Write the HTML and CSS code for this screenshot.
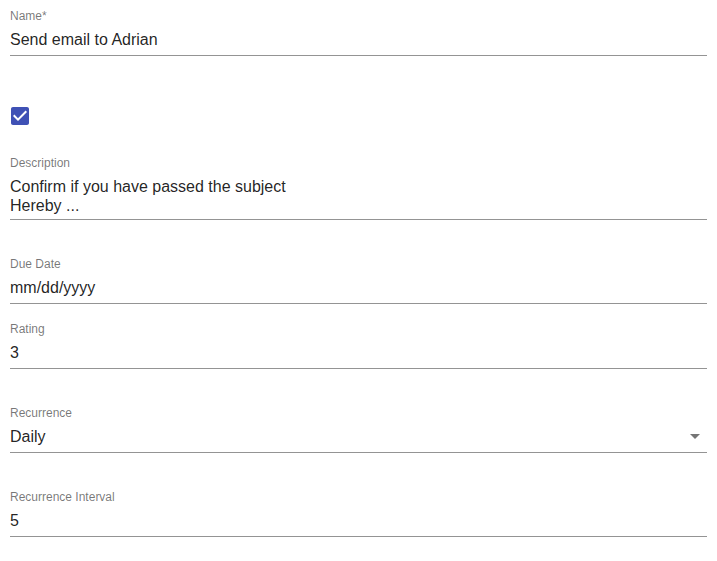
FILE: index.html
```html
<!DOCTYPE html>
<html lang="en">
<head>
<meta charset="utf-8">
<title>Task form</title>
<link rel="stylesheet" href="styles.css">
</head>
<body>
<form class="form">
  <div class="field field-name">
    <label class="label">Name*</label>
    <div class="input">Send email to Adrian</div>
  </div>
  <div class="check-row">
    <svg class="check" viewBox="0 0 24 24" width="24" height="24" aria-hidden="true"><path fill="#3f51b5" d="M19 3H5c-1.11 0-2 .9-2 2v14c0 1.1.89 2 2 2h14c1.11 0 2-.9 2-2V5c0-1.1-.89-2-2-2zm-9 14l-5-5 1.41-1.41L10 14.17l7.590-7.59L19 8l-9 9z"/></svg>
  </div>
  <div class="field field-desc">
    <label class="label">Description</label>
    <div class="input multiline"><div>Confirm if you have passed the subject</div><div>Hereby ...</div></div>
  </div>
  <div class="field field-due">
    <label class="label">Due Date</label>
    <div class="input">mm/dd/yyyy</div>
  </div>
  <div class="field field-rating">
    <label class="label">Rating</label>
    <div class="input">3</div>
  </div>
  <div class="field field-rec">
    <label class="label">Recurrence</label>
    <div class="input select"><span>Daily</span>
      <svg class="arrow" viewBox="0 0 24 24" width="24" height="24" aria-hidden="true"><path fill="rgba(0,0,0,0.54)" d="M7 10l5 5 5-5z"/></svg>
    </div>
  </div>
  <div class="field field-int">
    <label class="label">Recurrence Interval</label>
    <div class="input">5</div>
  </div>
</form>
</body>
</html>
```
FILE: styles.css
```css
html, body {
  margin: 0;
  padding: 0;
  background: #ffffff;
}
body {
  font-family: "Liberation Sans", Arial, sans-serif;
  color: rgba(0, 0, 0, 0.87);
}
.form {
  padding: 0 10px;
  display: flex;
  flex-direction: column;
}
.field {
  display: flex;
  flex-direction: column;
}
.label {
  display: block;
  font-size: 12px;
  line-height: 12px;
  height: 16px;
  padding-top: 3px;
  box-sizing: border-box;
  color: rgba(0, 0, 0, 0.54);
}
.input {
  font-size: 16px;
  line-height: 19px;
  padding: 7px 0 6px;
  border-bottom: 1px solid rgba(0, 0, 0, 0.42);
}
.multiline {
  padding-bottom: 4px;
}
.select {
  display: flex;
  justify-content: space-between;
  align-items: center;
  position: relative;
}
.arrow {
  position: absolute;
  right: 0;
  top: calc(50% - 12px);
}
.field-name { margin-top: 7px; }
.check-row {
  margin-top: 48px;
  height: 24px;
  margin-left: -2px;
  display: flex;
}
.check { display: block; }
.field-desc { margin-top: 26px; }
.field-due { margin-top: 35px; }
.field-rating { margin-top: 16px; }
.field-rec { margin-top: 35px; }
.field-int { margin-top: 35px; }
```
